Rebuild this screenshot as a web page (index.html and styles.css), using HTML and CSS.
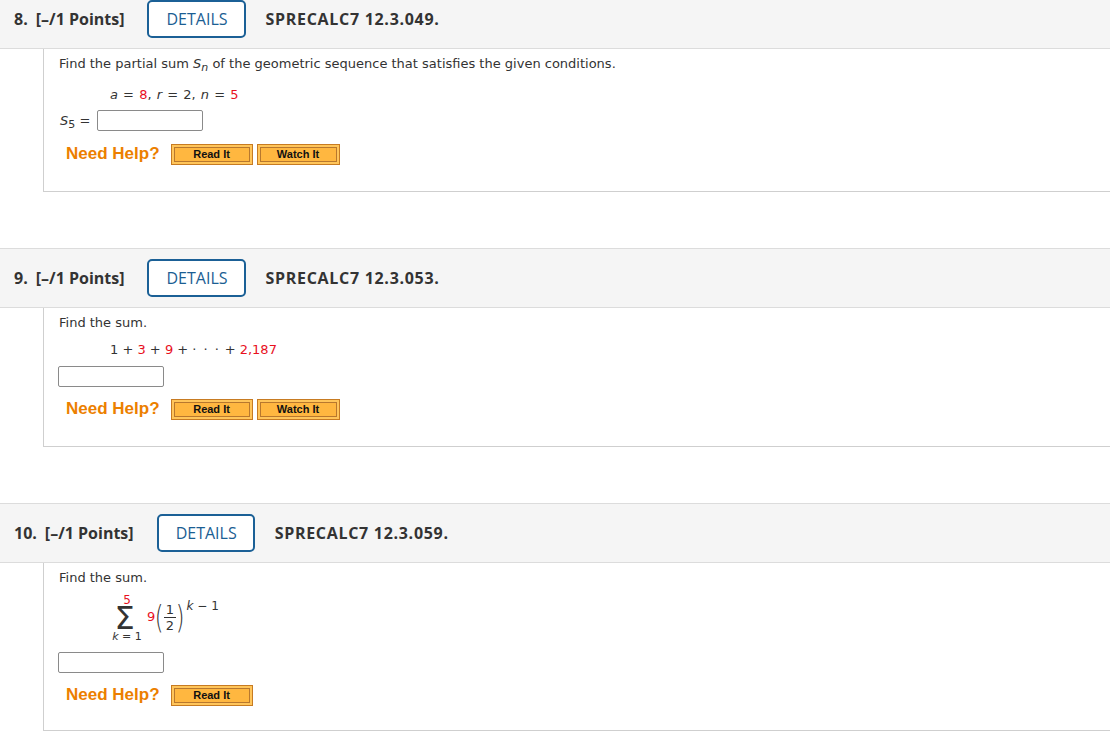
FILE: index.html
```html
<!DOCTYPE html>
<html>
<head>
<meta charset="utf-8">
<link rel="stylesheet" href="styles.css">
</head>
<body>
<div class="page">

  <section class="question q-first">
    <div class="qhead">
      <span class="qnum">8.</span>
      <span class="pts">[–/1 Points]</span>
      <button class="details">DETAILS</button>
      <span class="code">SPRECALC7 12.3.049.</span>
    </div>
    <div class="qbody body-1">
      <div class="prompt">Find the partial sum <i>S<sub>n</sub></i> of the geometric sequence that satisfies the given conditions.</div>
      <div class="math math-1"><i>a</i> = <span class="red">8</span>, <i>r</i> = 2, <i>n</i> = <span class="red">5</span></div>
      <div class="answer answer-1"><span class="lbl"><i>S</i><sub>5</sub> = </span><span class="input"></span></div>
      <div class="help help-1">
        <span class="need">Need Help?</span>
        <span class="hbtn read">Read It</span>
        <span class="hbtn watch">Watch It</span>
      </div>
    </div>
  </section>

  <section class="question">
    <div class="qhead">
      <span class="qnum">9.</span>
      <span class="pts">[–/1 Points]</span>
      <button class="details">DETAILS</button>
      <span class="code">SPRECALC7 12.3.053.</span>
    </div>
    <div class="qbody body-2">
      <div class="prompt">Find the sum.</div>
      <div class="math math-2">1 + <span class="red">3</span> + <span class="red">9</span> + <span class="dots">· · ·</span> + <span class="red">2,187</span></div>
      <div class="answer answer-2"><span class="input"></span></div>
      <div class="help help-2">
        <span class="need">Need Help?</span>
        <span class="hbtn read">Read It</span>
        <span class="hbtn watch">Watch It</span>
      </div>
    </div>
  </section>

  <section class="question">
    <div class="qhead">
      <span class="qnum">10.</span>
      <span class="pts">[–/1 Points]</span>
      <button class="details">DETAILS</button>
      <span class="code">SPRECALC7 12.3.059.</span>
    </div>
    <div class="qbody body-3">
      <div class="prompt">Find the sum.</div>
      <div class="sum">
        <div class="sigma">
          <span class="upper red">5</span>
          <span class="sig">Σ</span>
          <span class="lower"><i>k</i> = 1</span>
        </div>
        <span class="coef red">9</span>
        <span class="paren">(</span>
        <span class="frac"><span class="num">1</span><span class="den">2</span></span>
        <span class="paren">)</span>
        <span class="exp"><i>k</i> − 1</span>
      </div>
      <div class="answer answer-3"><span class="input"></span></div>
      <div class="help help-3">
        <span class="need">Need Help?</span>
        <span class="hbtn read">Read It</span>
      </div>
    </div>
  </section>

</div>
</body>
</html>
```

FILE: styles.css
```css
* { box-sizing: border-box; }
html, body { margin: 0; padding: 0; background: #fff; }
body { font-family: "DejaVu Sans", Verdana, sans-serif; color: #333; }

.page { overflow: hidden; height: 734px; }

.question { margin-bottom: 56px; }
.q-first { margin-top: -11px; }

.qhead {
  display: flex;
  align-items: center;
  height: 60px;
  padding: 10px 14px;
  background: #f5f5f5;
  border-top: 1px solid #dcdcdc;
  border-bottom: 1px solid #dcdcdc;
  font-family: "Open Sans", sans-serif;
  font-weight: 700;
  font-size: 16px;
  color: #333;
}
.qnum { margin-right: 8px; }
.pts { margin-right: 23px; }
.code { letter-spacing: 0.7px; }
.details {
  height: 38px;
  padding: 0 16px 0 17px;
  border: 2px solid #1b6096;
  border-radius: 5px;
  background: #fff;
  color: #1b5e93;
  font-family: "Open Sans", sans-serif;
  font-size: 16px;
  font-weight: 400;
  margin-right: 20px;
}

.qbody {
  margin-left: 43px;
  border-left: 1px solid #cfcfcf;
  border-bottom: 1px solid #cfcfcf;
  padding: 7px 0 0 15px;
  font-size: 13px;
  line-height: 16px;
}
.body-1 { height: 143px; }
.body-2 { height: 139px; }
.body-3 { height: 168px; }

.prompt sub, .lbl sub { font-size: 11px; line-height: 0; vertical-align: -3px; }

.red { color: #e8101e; }
.math { margin-left: 51px; }
.math-1 { margin-top: 15px; word-spacing: 1px; }
.math-2 { margin-top: 11px; }
.dots { letter-spacing: 1.5px; }

.answer { display: flex; align-items: center; }
.answer-1 { margin-top: 7px; margin-left: 1px; }
.answer-2 { margin-top: 8px; margin-left: -1px; }
.answer-3 { margin-top: 8px; margin-left: -1px; }
.lbl { margin-right: 7px; }
.input {
  display: block;
  width: 106px;
  height: 21px;
  border: 1px solid #8a8a8a;
  border-radius: 2px;
  background: #fff;
}

.help { display: flex; align-items: center; margin-left: 7px; height: 22px; }
.help-1 { margin-top: 12px; }
.help-2 { margin-top: 11px; }
.help-3 { margin-top: 11px; }
.need {
  font-family: "Liberation Sans", Arial, sans-serif;
  font-weight: 700;
  font-size: 17px;
  color: #ec7f00;
  margin-right: 11px;
}
.hbtn {
  display: flex;
  align-items: center;
  justify-content: center;
  height: 21px;
  background: #ffb740;
  border: 1px solid #c77b22;
  box-shadow: inset 0 0 0 2px #ffc55a, inset 0 0 0 3px #b8782e;
  font-family: "Liberation Sans", Arial, sans-serif;
  font-weight: 700;
  font-size: 11px;
  color: #111;
}
.read { width: 82px; margin-right: 4px; }
.watch { width: 83px; }

.sum {
  display: flex;
  align-items: center;
  margin-left: 51px;
  margin-top: 8px;
  height: 50px;
  white-space: nowrap;
}
.sigma {
  display: flex;
  flex-direction: column;
  align-items: center;
  flex-shrink: 0;
  width: 34px;
}
.upper { font-size: 12px; line-height: 12px; }
.sig { font-family: "DejaVu Sans", sans-serif; font-size: 32px; line-height: 24px; margin-left: -5px; }
.lower { font-size: 11px; line-height: 14px; }
.coef { margin-left: 3px; font-size: 13px; margin-top: -4px; }
.paren { font-size: 32px; font-weight: 300; line-height: 32px; transform: scaleX(0.7); margin: -4px -2px 0; }
.frac { display: flex; flex-direction: column; align-items: center; font-size: 13px; line-height: 15px; margin-top: -4px; }
.frac .num { border-bottom: 1px solid #333; padding: 0 2px; }
.exp { align-self: flex-start; margin-top: 4px; font-size: 12px; margin-left: 2px; }
```
